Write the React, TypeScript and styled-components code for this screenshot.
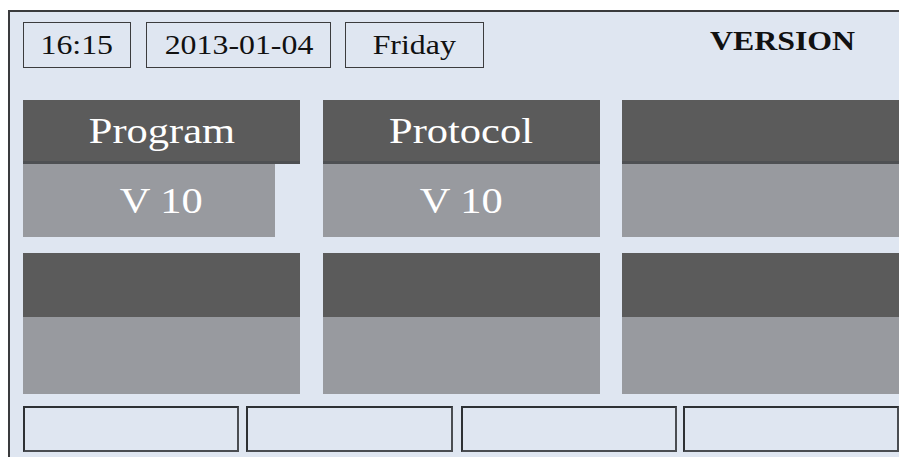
import React from "react";
import styled, { createGlobalStyle } from "styled-components";

const Global = createGlobalStyle`
  html, body {
    margin: 0;
    padding: 0;
    background: #ffffff;
    overflow: hidden;
  }
  body {
    font-family: "Liberation Serif", "Times New Roman", serif;
  }
`;

const Frame = styled.div`
  margin: 10px 0 0 8px;
  width: 900px;
  height: 460px;
  box-sizing: border-box;
  background: #dfe6f1;
  border-top: 2px solid #3a3b3d;
  border-left: 2px solid #3a3b3d;
  padding: 10px 0 0 13px;
  display: flex;
  flex-direction: column;
`;

const TopBar = styled.div`
  display: flex;
  align-items: center;
  width: 876px;
  height: 46px;
  gap: 14px;
`;

const InfoBox = styled.div<{ $w: number; $shift?: number }>`
  width: ${(p) => p.$w}px;
  margin-left: ${(p) => p.$shift ?? 0}px;
  height: 46px;
  box-sizing: border-box;
  border: 1px solid #3c3c3e;
  display: flex;
  align-items: center;
  justify-content: center;
  color: #111;
  font-size: 27px;
`;

const Stretched = styled.span<{ $bold?: boolean }>`
  display: inline-block;
  transform: scaleX(1.18);
  font-weight: ${(p) => (p.$bold ? 700 : 400)};
  line-height: 1;
`;

const Title = styled.div`
  margin-left: auto;
  margin-right: 44px;
  margin-top: -8px;
  font-size: 27px;
  color: #111;
  width: 145px;
  text-align: center;
`;

const Grid = styled.div`
  margin-top: 32px;
  display: grid;
  grid-template-columns: 277px 277px 277px;
  grid-template-rows: 137px 141px;
  column-gap: 22.5px;
  row-gap: 16px;
`;

const Panel = styled.div`
  display: flex;
  flex-direction: column;
`;

const PanelHeader = styled.div<{ $h: number; $divider?: boolean }>`
  height: ${(p) => p.$h}px;
  background: #5b5b5b;
  border-bottom: ${(p) => (p.$divider ? "3px solid #4e5053" : "none")};
  display: flex;
  align-items: center;
  justify-content: center;
  color: #ffffff;
  font-size: 36px;
`;

const PanelValue = styled.div<{ $w?: number }>`
  flex: 1;
  position: relative;
  display: flex;
  align-items: center;
  justify-content: center;
  color: #ffffff;
  font-size: 36px;
  &::before {
    content: "";
    position: absolute;
    left: 0;
    top: 0;
    bottom: 0;
    width: ${(p) => (p.$w ? `${p.$w}px` : "100%")};
    background: #989a9f;
  }
`;

const ValueText = styled(Stretched)`
  position: relative;
`;

const BottomBar = styled.div`
  margin-top: 12px;
  display: flex;
  height: 46px;
`;

const BottomButton = styled.div<{ $w: number; $gap: number }>`
  width: ${(p) => p.$w}px;
  margin-left: ${(p) => p.$gap}px;
  height: 46px;
  box-sizing: border-box;
  border: 2px solid #2e3135;
  border-right-color: #4a4d52;
  border-bottom-color: #4a4d52;
  background: #dfe6f1;
`;

type PanelData = { title?: string; value?: string; valueWidth?: number };

const row1: PanelData[] = [
  { title: "Program", value: "V 10", valueWidth: 252 },
  { title: "Protocol", value: "V 10" },
  {},
];
const row2: PanelData[] = [{}, {}, {}];

export default function App() {
  return (
    <>
      <Global />
      <Frame>
        <TopBar>
          <InfoBox $w={108}>
            <Stretched>16:15</Stretched>
          </InfoBox>
          <InfoBox $w={185} $shift={1}>
            <Stretched>2013-01-04</Stretched>
          </InfoBox>
          <InfoBox $w={139}>
            <Stretched>Friday</Stretched>
          </InfoBox>
          <Title>
            <Stretched $bold>VERSION</Stretched>
          </Title>
        </TopBar>
        <Grid>
          {row1.map((p, i) => (
            <Panel key={`a${i}`}>
              <PanelHeader $h={61} $divider>
                {p.title && <Stretched>{p.title}</Stretched>}
              </PanelHeader>
              <PanelValue $w={p.valueWidth}>
                {p.value && <ValueText>{p.value}</ValueText>}
              </PanelValue>
            </Panel>
          ))}
          {row2.map((p, i) => (
            <Panel key={`b${i}`}>
              <PanelHeader $h={64}>
                {p.title && <Stretched>{p.title}</Stretched>}
              </PanelHeader>
              <PanelValue $w={p.valueWidth}>
                {p.value && <ValueText>{p.value}</ValueText>}
              </PanelValue>
            </Panel>
          ))}
        </Grid>
        <BottomBar>
          <BottomButton $w={216} $gap={0} />
          <BottomButton $w={207} $gap={7} />
          <BottomButton $w={216} $gap={8} />
          <BottomButton $w={216} $gap={6} />
        </BottomBar>
      </Frame>
    </>
  );
}
